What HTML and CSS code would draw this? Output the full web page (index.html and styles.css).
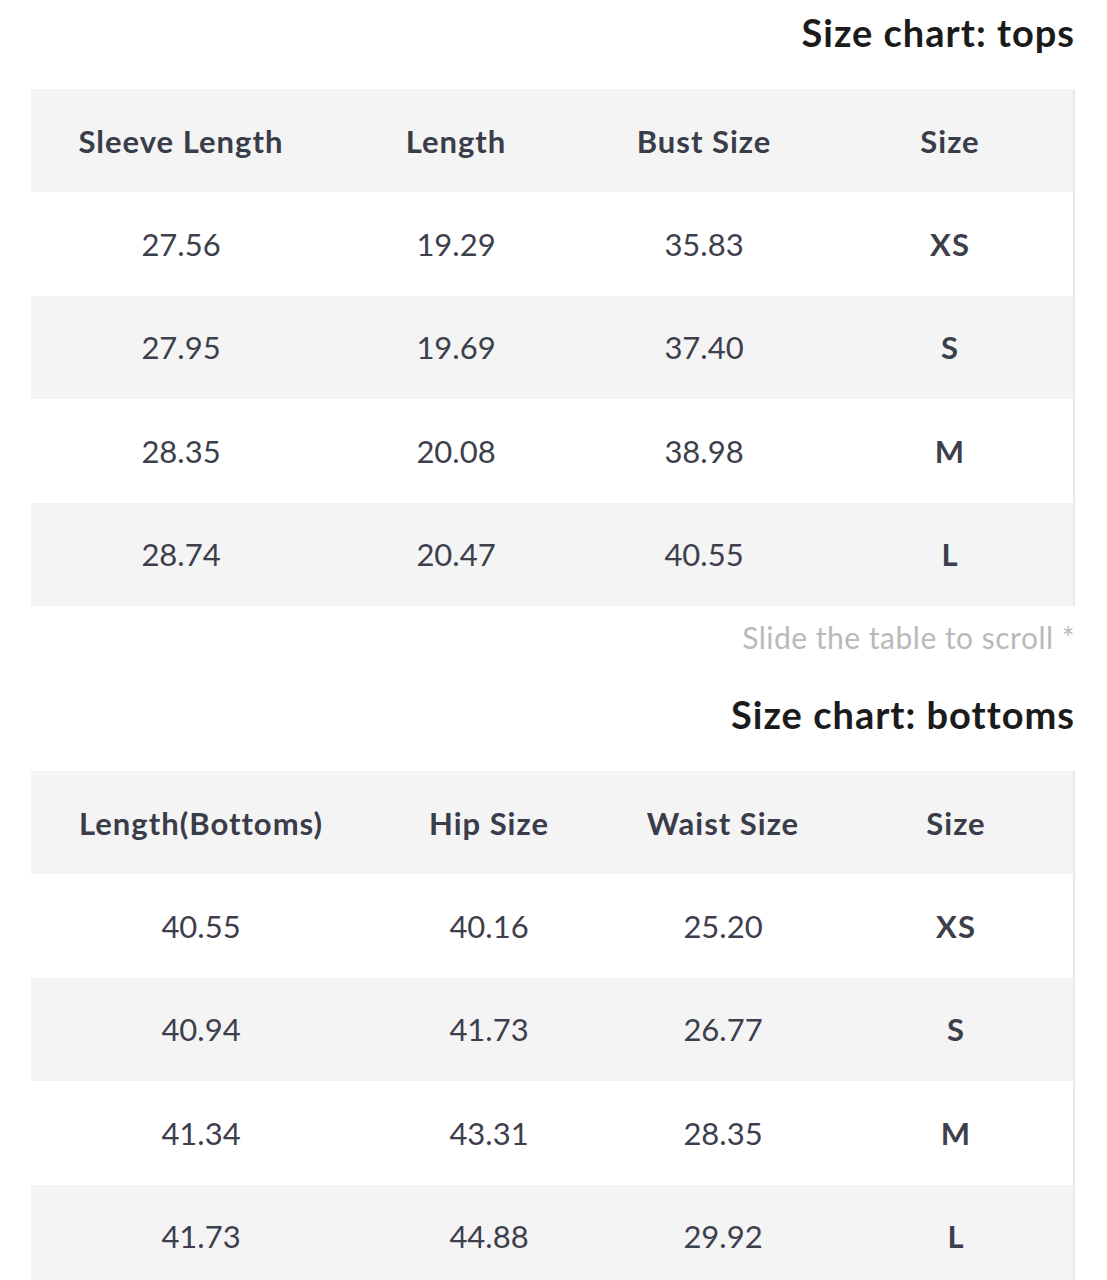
FILE: index.html
```html
<!DOCTYPE html>
<html>
<head>
<meta charset="utf-8">
<link rel="stylesheet" href="styles.css">
</head>
<body>
<div class="page">
  <h2 class="title">Size chart: tops</h2>
  <div class="wrap">
    <table class="chart tops">
      <colgroup><col class="c1"><col class="c2"><col class="c3"><col class="c4"></colgroup>
      <thead><tr><th>Sleeve Length</th><th>Length</th><th>Bust Size</th><th>Size</th></tr></thead>
      <tbody>
        <tr><td>27.56</td><td>19.29</td><td>35.83</td><td class="sz">XS</td></tr>
        <tr><td>27.95</td><td>19.69</td><td>37.40</td><td class="sz">S</td></tr>
        <tr><td>28.35</td><td>20.08</td><td>38.98</td><td class="sz">M</td></tr>
        <tr><td>28.74</td><td>20.47</td><td>40.55</td><td class="sz">L</td></tr>
      </tbody>
    </table>
  </div>
  <p class="hint">Slide the table to scroll *</p>
  <h2 class="title second">Size chart: bottoms</h2>
  <div class="wrap">
    <table class="chart bottoms">
      <colgroup><col class="c1"><col class="c2"><col class="c3"><col class="c4"></colgroup>
      <thead><tr><th>Length(Bottoms)</th><th>Hip Size</th><th>Waist Size</th><th>Size</th></tr></thead>
      <tbody>
        <tr><td>40.55</td><td>40.16</td><td>25.20</td><td class="sz">XS</td></tr>
        <tr><td>40.94</td><td>41.73</td><td>26.77</td><td class="sz">S</td></tr>
        <tr><td>41.34</td><td>43.31</td><td>28.35</td><td class="sz">M</td></tr>
        <tr><td>41.73</td><td>44.88</td><td>29.92</td><td class="sz">L</td></tr>
      </tbody>
    </table>
  </div>
</div>
</body>
</html>
```
FILE: styles.css
```css
html, body {
  margin: 0;
  padding: 0;
  background: #fff;
}
body {
  font-family: Lato, "Open Sans", sans-serif;
  color: #3b3e4b;
}
.page {
  padding: 0 32px 0 31px;
}
.title {
  margin: 0;
  padding-top: 4px;
  height: 89px;
  box-sizing: border-box;
  text-align: right;
  font-size: 38px;
  font-weight: 700;
  letter-spacing: 1px;
  line-height: 56px;
  color: #1b1b1b;
}
.title.second {
  padding-top: 18px;
  height: 103px;
}
.wrap {
  border-right: 2px solid #e9e9e9;
}
.chart {
  width: 100%;
  border-collapse: collapse;
  table-layout: fixed;
}
.tops .c1 { width: 300px; }
.tops .c2 { width: 250px; }
.tops .c3 { width: 246px; }
.bottoms .c1 { width: 340px; }
.bottoms .c2 { width: 236px; }
.bottoms .c3 { width: 232px; }
.chart th, .chart td {
  height: 103.4px;
  padding: 0;
  text-align: center;
  font-size: 31px;
  line-height: 36px;
}
.chart th {
  font-weight: 700;
  letter-spacing: 1px;
  color: #393c49;
  background: #f4f4f4;
}
.chart td {
  font-weight: 400;
  color: #3d404c;
}
.chart td.sz {
  font-weight: 700;
  letter-spacing: 1px;
}
.chart tbody tr:nth-child(even) td {
  background: #f4f4f4;
}
.hint {
  margin: 0;
  height: 62px;
  text-align: right;
  font-size: 30px;
  letter-spacing: 0.5px;
  line-height: 62px;
  color: #b9b9b9;
}
```
